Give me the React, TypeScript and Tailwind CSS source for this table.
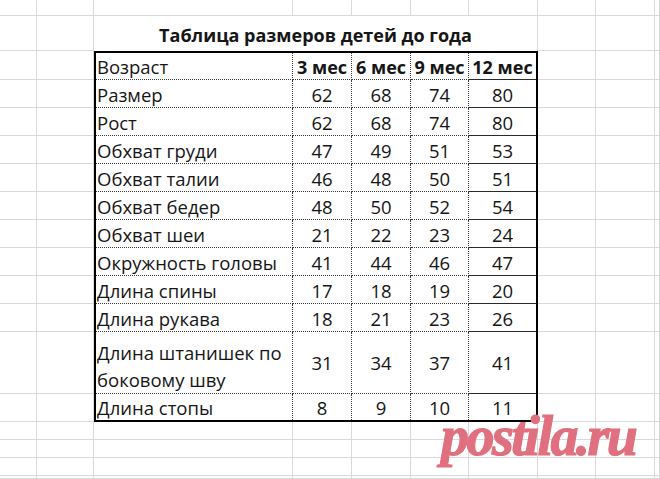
import React from "react";

const rows: { label: React.ReactNode; v: string[]; tall?: boolean }[] = [
  { label: "Размер", v: ["62", "68", "74", "80"] },
  { label: "Рост", v: ["62", "68", "74", "80"] },
  { label: "Обхват груди", v: ["47", "49", "51", "53"] },
  { label: "Обхват талии", v: ["46", "48", "50", "51"] },
  { label: "Обхват бедер", v: ["48", "50", "52", "54"] },
  { label: "Обхват шеи", v: ["21", "22", "23", "24"] },
  { label: "Окружность головы", v: ["41", "44", "46", "47"] },
  { label: "Длина спины", v: ["17", "18", "19", "20"] },
  { label: "Длина рукава", v: ["18", "21", "23", "26"] },
  {
    label: (
      <>
        Длина штанишек по
        <br />
        боковому шву
      </>
    ),
    v: ["31", "34", "37", "41"],
    tall: true,
  },
  { label: "Длина стопы", v: ["8", "9", "10", "11"] },
];

const headers = ["3 мес", "6 мес", "9 мес", "12 мес"];

function TableCell({
  children,
  lastRow,
  lastCol,
  align,
  bold,
  center,
  tallLabel,
}: {
  children: React.ReactNode;
  lastRow: boolean;
  lastCol: boolean;
  align: "left" | "center";
  bold?: boolean;
  center?: boolean;
  tallLabel?: boolean;
}) {
  const cls = [
    "flex min-w-0 whitespace-nowrap",
    lastRow ? "" : "border-b border-[#2a2a2a]",
    lastCol ? "" : "border-r border-dotted border-[#3a3a3a]",
    align === "left" ? "justify-start pl-[1px]" : "justify-center",
    center ? "items-center" : "items-end",
    bold ? "font-bold text-[18px]" : "font-normal text-[18.5px]",
    tallLabel ? "leading-[27px]" : "leading-[24px]",
  ].join(" ");
  return <div className={cls}>{children}</div>;
}

export default function App() {
  const bgCells = Array.from({ length: 115 });
  return (
    <div className="relative w-[660px] h-[479px] overflow-hidden bg-white text-[#161616] text-[18px] [font-family:'Open_Sans',sans-serif]">
      <div className="grid h-full grid-cols-[37px_57px_199px_59px_59px_58px_69px_58px_59px_1fr] grid-rows-[16px_35px_29px_repeat(9,28px)_62px_28px_18px_18px_18px_1fr]">
        <div className="col-start-3 col-end-8 row-start-2 row-end-3 flex items-end justify-center border-r border-[#d9d9d9] pb-[4px] font-bold leading-[24px] whitespace-nowrap">
          Таблица размеров детей до года
        </div>
        <div className="col-start-3 col-end-8 row-start-3 row-end-15 grid grid-cols-[197px_59px_59px_58px_67px] grid-rows-[27px_repeat(9,28px)_62px_26px] border-2 border-black bg-white">
          <TableCell lastRow={false} lastCol={false} align="left">
            Возраст
          </TableCell>
          {headers.map((h, i) => (
            <TableCell key={h} lastRow={false} lastCol={i === 3} align="center" bold>
              {h}
            </TableCell>
          ))}
          {rows.map((r, ri) => (
            <React.Fragment key={ri}>
              <TableCell
                lastRow={ri === rows.length - 1}
                lastCol={false}
                align="left"
                tallLabel={r.tall}
              >
                <span>{r.label}</span>
              </TableCell>
              {r.v.map((val, ci) => (
                <TableCell
                  key={ci}
                  lastRow={ri === rows.length - 1}
                  lastCol={ci === 3}
                  align="center"
                  center={r.tall}
                >
                  {val}
                </TableCell>
              ))}
            </React.Fragment>
          ))}
        </div>
        {bgCells.map((_, i) => (
          <div key={i} className="border-r border-b border-[#d9d9d9]" />
        ))}
      </div>
      <span className="absolute left-[441px] top-[421px] text-[56px] leading-[30px] font-bold italic tracking-[-2.5px] text-[#e0707f] [-webkit-text-stroke:1.2px_#e0707f] whitespace-nowrap [font-family:'Liberation_Serif',serif]">
        postila.ru
      </span>
    </div>
  );
}
